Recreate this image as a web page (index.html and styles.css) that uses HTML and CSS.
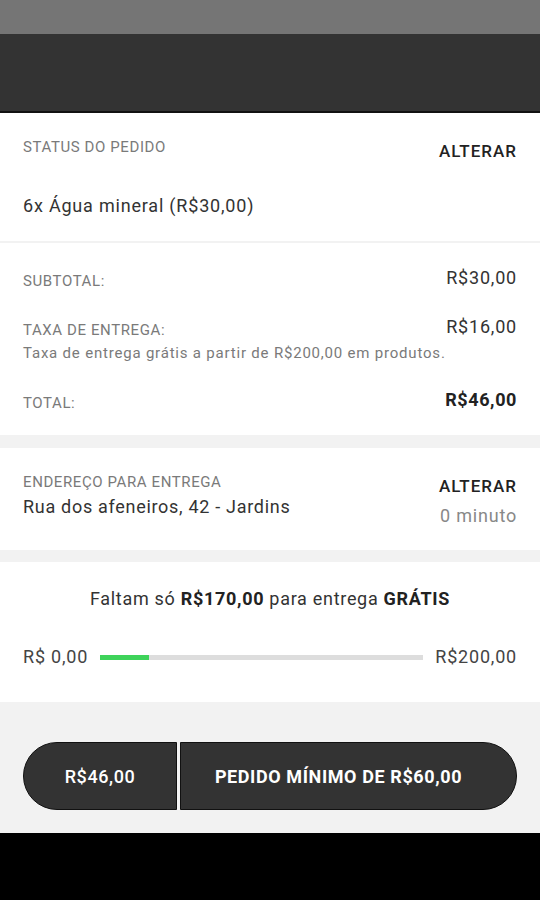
FILE: index.html
```html
<!DOCTYPE html>
<html>
<head>
    <title>Carrinho</title>
    <link rel="stylesheet" href="styles.css">
</head>
<body>
    <div class="statusbar"></div>
    <div class="toolbar"></div>

    <!-- Pedido -->
    <div class="section order">
        <div class="row">
            <span class="label">STATUS DO PEDIDO</span>
            <span class="action">ALTERAR</span>
        </div>
        <div class="item">6x Água mineral (R$30,00)</div>
    </div>

    <!-- Totais -->
    <div class="section totals">
        <div class="row">
            <span class="label">SUBTOTAL:</span>
            <span class="value">R$30,00</span>
        </div>
        <div class="row fee">
            <span class="label">TAXA DE ENTREGA:</span>
            <span class="value">R$16,00</span>
        </div>
        <div class="note">Taxa de entrega grátis a partir de R$200,00 em produtos.</div>
        <div class="row sum">
            <span class="label">TOTAL:</span>
            <span class="value total">R$46,00</span>
        </div>
    </div>

    <!-- Endereço -->
    <div class="section address">
        <div class="address-info">
            <span class="label">ENDEREÇO PARA ENTREGA</span>
            <span class="street">Rua dos afeneiros, 42 - Jardins</span>
        </div>
        <div class="address-side">
            <span class="action">ALTERAR</span>
            <span class="eta">0 minuto</span>
        </div>
    </div>

    <!-- Frete grátis -->
    <div class="section free">
        <p class="free-text">Faltam só <b>R$170,00</b> para entrega <b>GRÁTIS</b></p>
        <div class="progress">
            <span>R$ 0,00</span>
            <div class="bar"><div class="fill" style="width: 15%"></div></div>
            <span>R$200,00</span>
        </div>
    </div>

    <div class="footer">
        <div class="checkout">
            <div class="price">R$46,00</div>
            <div class="submit">PEDIDO MÍNIMO DE R$60,00</div>
        </div>
    </div>
    <div class="navbar"></div>
</body>
</html>
```

FILE: styles.css
```css
body { margin: 0; background: #f2f2f2; font-family: Roboto, "Noto Sans", sans-serif; color: #333; }
.statusbar { height: 34px; background: #757575; }
.toolbar { height: 77px; background: #333; border-bottom: 2px solid #111; }

.section { background: #fff; padding: 0 23px; box-sizing: border-box; }
.row { display: flex; justify-content: space-between; align-items: flex-start; }
.label { font-size: 15px; line-height: 20px; color: #7a7a7a; letter-spacing: 0.6px; }
.row .label { margin-top: 4px; }
.action { font-size: 17px; line-height: 20px; font-weight: 500; color: #222; letter-spacing: 1px; }
.value { font-size: 18px; line-height: 22px; color: #333; letter-spacing: 0.8px; }
.value.total { font-weight: 700; color: #222; letter-spacing: 0.6px; }

.order { height: 128px; padding-top: 24px; margin-bottom: 2px; }
.order .row .label { margin-top: 0; }
.order .action { margin-top: 4px; }
.item { font-size: 18px; line-height: 22px; letter-spacing: 0.8px; margin-top: 34px; }

.totals { height: 192px; padding-top: 24px; margin-bottom: 13px; }
.fee { margin-top: 25px; }
.note { font-size: 15px; line-height: 20px; color: #7a7a7a; letter-spacing: 0.8px; margin-top: 3px; }
.sum { margin-top: 26px; }

.address { display: flex; justify-content: space-between; padding-top: 24px; height: 102px; margin-bottom: 12px; }
.address-info, .address-side { display: flex; flex-direction: column; }
.address-side { align-items: flex-end; padding-top: 4px; }
.street { font-size: 18px; line-height: 22px; letter-spacing: 0.7px; margin-top: 4px; }
.eta { font-size: 18px; line-height: 22px; letter-spacing: 0.8px; color: #888; margin-top: 9px; }

.free { height: 140px; padding-top: 26px; }
.free-text { margin: 0; text-align: center; font-size: 18px; line-height: 22px; letter-spacing: 0.7px; color: #333; }
.free-text b { color: #222; }
.progress { display: flex; align-items: center; gap: 12px; margin-top: 36px; font-size: 18px; line-height: 22px; letter-spacing: 0.8px; color: #444; }
.bar { flex: 1; height: 5px; background: #ddd; }
.fill { height: 100%; background: #3ed35a; }

.footer { height: 131px; padding: 40px 23px 0; box-sizing: border-box; }
.checkout { display: flex; height: 68px; gap: 3px; font-size: 18px; font-weight: 700; color: #fff; letter-spacing: 0.6px; }
.price, .submit { background: #333; border: 1px solid #111; display: flex; align-items: center; justify-content: center; }
.price { width: 152px; border-radius: 34px 0 0 34px; font-weight: 500; }
.submit { flex: 1; border-radius: 0 34px 34px 0; padding-right: 20px; }
.navbar { height: 67px; background: #000; }
```
